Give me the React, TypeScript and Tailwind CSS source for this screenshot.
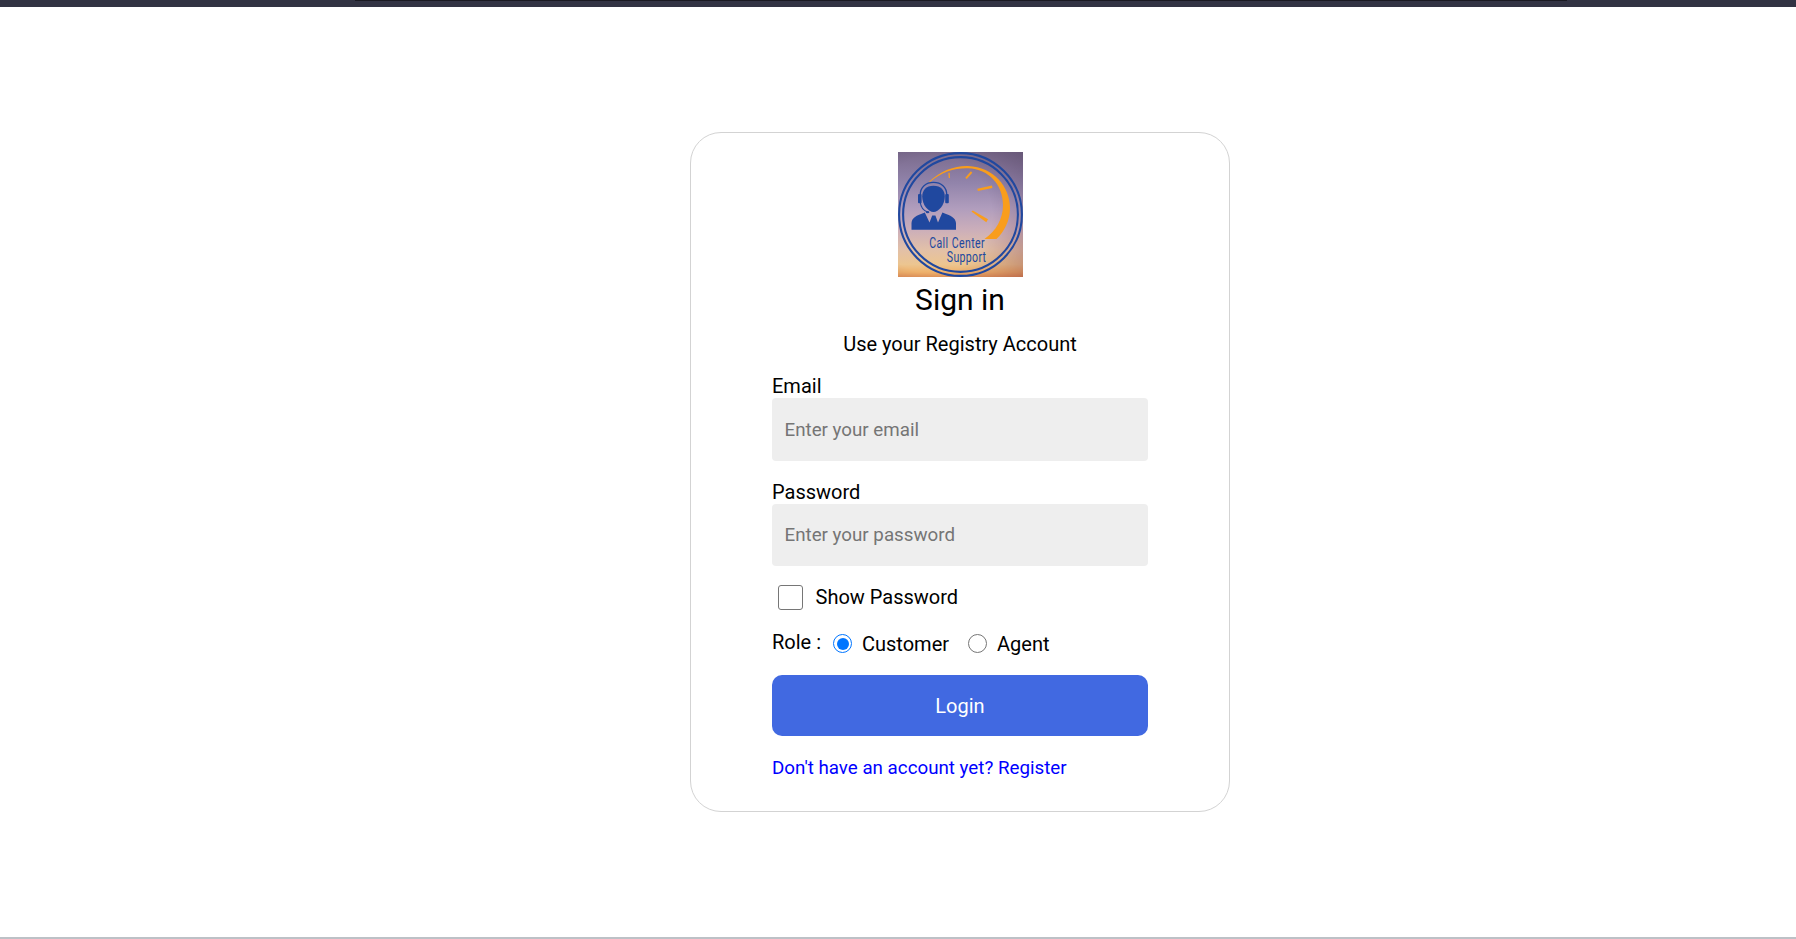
import { useState } from "react";

function Logo() {
  return (
    <svg width="125" height="125" viewBox="0 0 125 125" className="block" role="img">
      <defs>
        <linearGradient id="sky" x1="0" y1="0" x2="0" y2="1">
          <stop offset="0" stopColor="#7a6a8c" />
          <stop offset="0.25" stopColor="#9284ab" />
          <stop offset="0.45" stopColor="#b09dbd" />
          <stop offset="0.62" stopColor="#cbaeba" />
          <stop offset="0.78" stopColor="#e2c0a8" />
          <stop offset="0.9" stopColor="#ecc590" />
          <stop offset="0.96" stopColor="#eeb26c" />
          <stop offset="1" stopColor="#e0945a" />
        </linearGradient>
        <linearGradient id="tint" x1="0" y1="0" x2="0" y2="1">
          <stop offset="0" stopColor="#4a3a58" />
          <stop offset="0.5" stopColor="#5c4060" />
          <stop offset="1" stopColor="#8a3038" />
        </linearGradient>
        <radialGradient id="fade" cx="0.28" cy="0.5" r="0.95">
          <stop offset="0.5" stopColor="#fff" stopOpacity="0" />
          <stop offset="1" stopColor="#fff" stopOpacity="0.45" />
        </radialGradient>
        <mask id="corners">
          <rect width="125" height="125" fill="url(#fade)" />
        </mask>
      </defs>
      <rect width="125" height="125" fill="url(#sky)" />
      <rect width="125" height="125" fill="url(#tint)" mask="url(#corners)" />
      <g fill="none" stroke="#20489f">
        <circle cx="62.5" cy="62.5" r="61.4" strokeWidth="2.1" />
        <circle cx="62.5" cy="62.5" r="57.4" strokeWidth="2.1" />
      </g>
      <path
        d="M31 29.8C43 18.5 57 13.6 70 14C96 15 112 35 112 56C112 69 106 80 98.5 87H86.5C98 79 105 67 105 53C105 33 91 17 70 16.2C57 15.8 43 20 32 30Z"
        fill="#f99d1c"
      />
      <g stroke="#f99d1c">
        <path d="M51 20.8L51.4 26" strokeWidth="1.3" />
        <path d="M73.6 20L68 26.4" strokeWidth="1.9" />
        <path d="M79.6 37.9L94.2 34.7" strokeWidth="2.5" />
      </g>
      <path d="M73.4 59.6L74.8 58.4L90 67.2L88.3 70.2Z" fill="#f99d1c" />
      <path
        d="M35.5 33.8C43 33.8 46.8 38.5 46.8 44.5C46.8 53 40.5 60 35.5 60C30.5 60 24.2 53 24.2 44.5C24.2 38.5 28 33.8 35.5 33.8Z"
        fill="#20489f"
      />
      <g fill="none" stroke="#20489f">
        <path d="M22.2 43C22.2 35 28 30.4 35.5 30.4C43 30.4 48.8 35 48.8 43" strokeWidth="1.3" />
        <path d="M22.2 50C22.8 55 25.5 58.6 29.5 60" strokeWidth="1.1" />
      </g>
      <g fill="#20489f">
        <rect x="20" y="42" width="3.6" height="9.2" rx="1" />
        <rect x="47.2" y="42" width="3.6" height="9.2" rx="1" />
        <ellipse cx="29.6" cy="60.2" rx="1.8" ry="1.1" />
        <path d="M13.5 77.8V71C14 65.5 18 63.6 26.8 60.4L31.5 70.5L34.2 63.6H37.4L40 70.5L44.4 60.4C53 63.6 57.5 65.5 58 71V77.8Z" />
      </g>
      <g fill="#20489f" fontFamily="Roboto, sans-serif" fontSize="15.5">
        <text transform="translate(31.2 95.6) scale(0.68 1)" textLength="81.5" lengthAdjust="spacing">Call Center</text>
        <text transform="translate(48.8 110) scale(0.68 1)" textLength="57.7" lengthAdjust="spacing">Support</text>
      </g>
    </svg>
  );
}

const radioClass =
  "mt-0.5 flex size-[19px] items-center justify-center rounded-full border border-[#767676] bg-white has-[:checked]:border-[#0075ff]";
const radioDotClass = "size-3 shrink-0 appearance-none rounded-full checked:bg-[#0075ff]";

export default function App() {
  const [role, setRole] = useState("customer");
  const [visible, setVisible] = useState(false);

  return (
    <div className="flex h-[939px] flex-col bg-white font-['Roboto',sans-serif] text-xl/6 text-black">
      <header className="flex h-[7px] justify-center bg-[#323343] pr-[40px] pl-[165px]">
        <div className="h-px w-[1212px] bg-[#1a1a22]" />
      </header>
      <main className="flex flex-1 items-start justify-center border-b-2 border-[#bdc1c6] pt-[125px] pl-[124px]">
        <section className="flex h-[680px] w-[540px] flex-col items-center rounded-[31px] border border-[#d3d3d3] pt-[19px]">
          <Logo />
          <h1 className="mt-[5px] text-[30px]/9">Sign in</h1>
          <p className="mt-3.5">Use your Registry Account</p>
          <form className="mt-[18px] flex w-[376px] flex-col" onSubmit={(e) => e.preventDefault()}>
            <label htmlFor="email">Email</label>
            <input
              id="email"
              type="email"
              placeholder="Enter your email"
              className="h-[63px] rounded-[4px] bg-[#eeeeee] px-[12.5px] text-[18.75px] placeholder:text-[#757575]"
            />
            <label htmlFor="password" className="mt-[19px]">Password</label>
            <input
              id="password"
              type={visible ? "text" : "password"}
              placeholder="Enter your password"
              className="h-[62px] rounded-[4px] bg-[#eeeeee] px-[12.5px] text-[18.75px] placeholder:text-[#757575]"
            />
            <label className="mt-[19px] flex h-[25px] items-start">
              <input
                type="checkbox"
                checked={visible}
                onChange={() => setVisible(!visible)}
                className="mr-[13px] ml-[5.5px] size-[25px] appearance-none rounded-[3px] border border-[#767676] bg-white checked:bg-[#0075ff]"
              />
              Show Password
            </label>
            <div className="mt-5 flex h-[26px] items-start">
              <span className="w-[61px]">Role :</span>
              <label className="flex items-start gap-2.5 pt-0.5">
                <span className={radioClass}>
                  <input type="radio" name="role" checked={role === "customer"} onChange={() => setRole("customer")} className={radioDotClass} />
                </span>
                Customer
              </label>
              <label className="ml-[19px] flex items-start gap-2.5 pt-0.5">
                <span className={radioClass}>
                  <input type="radio" name="role" checked={role === "agent"} onChange={() => setRole("agent")} className={radioDotClass} />
                </span>
                Agent
              </label>
            </div>
            <button className="mt-[19px] h-[61px] rounded-[10px] bg-[#4169e1] text-center text-white">Login</button>
            <a href="#register" className="mt-5 text-[18.75px] text-[#0000ff]">Don't have an account yet? Register</a>
          </form>
        </section>
      </main>
    </div>
  );
}
